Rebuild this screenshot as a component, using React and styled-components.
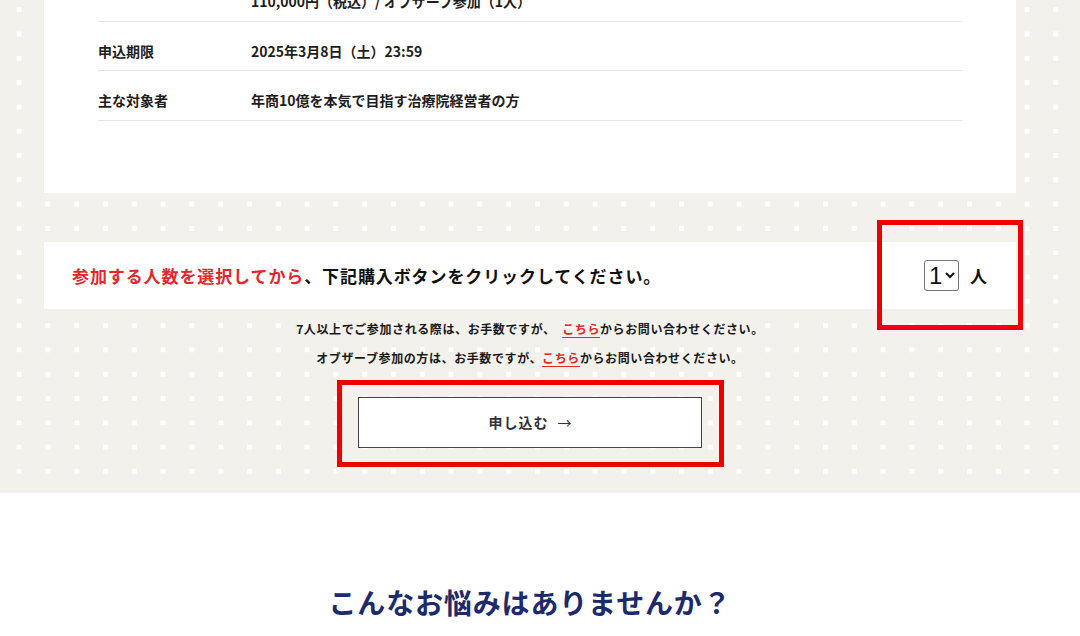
import React from "react";
import styled, { createGlobalStyle } from "styled-components";

const GlobalStyle = createGlobalStyle`
  html, body { margin: 0; padding: 0; background: #fff; }
  body {
    font-family: "Noto Sans CJK JP", "Noto Sans", sans-serif;
    color: #1a1a1a;
    overflow: hidden;
  }
  * { box-sizing: border-box; }
`;

const DotSection = styled.section`
  margin-top: -28px;
  background-color: #f2f1eb;
  background-image: conic-gradient(at 4.6px 4.6px, transparent 0deg 270deg, #ffffff 270deg);
  background-size: 28.8px 24.3px;
  background-position: 16.7px 11px;
  padding-bottom: 45px;
`;

const Inner = styled.div`
  width: 972px;
  margin: 0 64px 0 44px;
`;

const Card = styled.div`
  background: #fff;
  padding: 0 54px 72px;
`;

const Row = styled.div`
  display: grid;
  grid-template-columns: 153px 1fr;
  padding: 19px 0 9.5px;
  border-bottom: 1px solid #e6e6e6;
  font-size: 14px;
  line-height: 20px;
  font-weight: 700;
  color: #1e1e1e;
`;

const Label = styled.div``;
const Value = styled.div``;

const Bar = styled.div`
  position: relative;
  margin-top: 49px;
  height: 67px;
  background: #fff;
  display: flex;
  align-items: center;
  justify-content: space-between;
  padding: 0 29px 0 28px;
`;

const Lead = styled.p`
  margin: 0;
  font-size: 17px;
  font-weight: 700;
  letter-spacing: 0.9px;
  color: #111;
`;

const Accent = styled.span`
  color: #e5262c;
`;

const Quantity = styled.label`
  display: flex;
  align-items: center;
  gap: 11px;
  font-size: 17px;
  font-weight: 700;
  color: #111;
`;

const Select = styled.select`
  width: 35px;
  height: 31px;
  font-family: "Liberation Sans", Arial, sans-serif;
  font-size: 24px;
  padding: 0;
  border: 1px solid #767676;
  border-radius: 3px;
  background: #fff;
  color: #111;
`;

const Highlight = styled.div`
  position: absolute;
  border: 5px solid #ee0000;
  pointer-events: none;
  top: ${(p) => p.$top}px;
  right: ${(p) => p.$right}px;
  bottom: ${(p) => p.$bottom}px;
  left: ${(p) => p.$left}px;
`;

const QtyHighlight = styled(Highlight)`
  left: auto;
  bottom: auto;
  width: 146px;
  height: 110px;
`;

const Notes = styled.div`
  padding-top: 5px;
  text-align: center;
`;

const Note = styled.p`
  margin: 0;
  font-size: 12px;
  line-height: 29px;
  font-weight: 700;
  letter-spacing: 0.6px;
  color: #1a1a1a;
`;

const Link = styled.a`
  color: #e5262c;
  text-decoration: underline;
  text-underline-offset: 3px;
`;

const ButtonWrap = styled.div`
  position: relative;
  width: 344px;
  margin: 25px auto 0;
`;

const ApplyButton = styled.button`
  display: flex;
  align-items: center;
  justify-content: center;
  gap: 9px;
  width: 100%;
  height: 51px;
  background: #fff;
  border: 1px solid #444;
  font-family: "Noto Sans CJK JP", sans-serif;
  font-size: 14px;
  font-weight: 700;
  letter-spacing: 1px;
  color: #333;
  cursor: pointer;
`;

const Arrow = styled.span`
  font-family: "Noto Sans CJK JP", sans-serif;
  font-weight: 400;
  font-size: 14px;
  letter-spacing: 0;
`;

const Trouble = styled.section`
  background: #fff;
  padding-top: 88px;
`;

const Heading = styled.h2`
  margin: 0;
  text-align: center;
  font-size: 28px;
  line-height: 42px;
  font-weight: 700;
  color: #1d2a6c;
  letter-spacing: 0.85px;
`;

const rows = [
  ["", "110,000円（税込）/ オブザーブ参加（1人）"],
  ["申込期限", "2025年3月8日（土）23:59"],
  ["主な対象者", "年商10億を本気で目指す治療院経営者の方"],
];

export default function App() {
  return (
    <>
      <GlobalStyle />
      <DotSection>
        <Inner>
          <Card>
            {rows.map(([l, v], i) => (
              <Row key={i}>
                <Label>{l}</Label>
                <Value>{v}</Value>
              </Row>
            ))}
          </Card>
          <Bar>
            <Lead>
              <Accent>参加する人数を選択してから</Accent>、下記購入ボタンをクリックしてください。
            </Lead>
            <Quantity>
              <Select defaultValue="1">
                {[1, 2, 3, 4, 5, 6].map((n) => (
                  <option key={n} value={n}>
                    {n}
                  </option>
                ))}
              </Select>
              人
            </Quantity>
            <QtyHighlight $top={-22} $right={-7} />
          </Bar>
          <Notes>
            <Note>
              7人以上でご参加される際は、お手数ですが、　<Link href="#">こちら</Link>からお問い合わせください。
            </Note>
            <Note>
              オブザーブ参加の方は、お手数ですが、<Link href="#">こちら</Link>からお問い合わせください。
            </Note>
          </Notes>
          <ButtonWrap>
            <ApplyButton type="button">
              申し込む<Arrow>→</Arrow>
            </ApplyButton>
            <Highlight $top={-17} $right={-22} $bottom={-19} $left={-21} />
          </ButtonWrap>
        </Inner>
      </DotSection>
      <Trouble>
        <Inner>
          <Heading>こんなお悩みはありませんか？</Heading>
        </Inner>
      </Trouble>
    </>
  );
}
